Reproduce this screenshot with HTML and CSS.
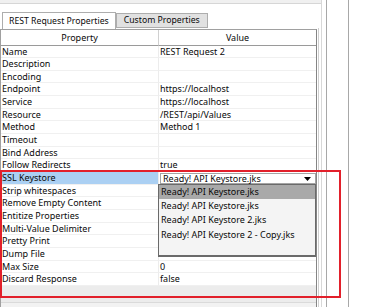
FILE: index.html
```html
<!doctype html>
<html lang=en>
<head>
	<title>REST Request Properties</title>
	<link rel="stylesheet" href="styles.css">
</head>

<body>
	<div class=app>
		<div class=left>
			<div class=topbar></div>
			<div class=body>
				<div class=panel>
					<div class=tabs>
						<div class="tab active">REST Request Properties</div>
						<div class=tab>Custom Properties</div>
					</div>
					<div class=grid>
						<div class=head>Property</div><div class=head>Value</div>
						<div class=prop>Name</div><div class=val>REST Request 2</div>
						<div class=prop>Description</div><div class=val></div>
						<div class=prop>Encoding</div><div class=val></div>
						<div class=prop>Endpoint</div><div class=val>https://localhost</div>
						<div class=prop>Service</div><div class=val>https://localhost</div>
						<div class=prop>Resource</div><div class=val>/REST/api/Values</div>
						<div class=prop>Method</div><div class=val>Method 1</div>
						<div class=prop>Timeout</div><div class=val></div>
						<div class=prop>Bind Address</div><div class=val></div>
						<div class=prop>Follow Redirects</div><div class=val>true</div>
						<div class="prop selected">SSL Keystore</div>
						<div class=val>
							<div class=combo>
								<span>Ready! API Keystore.jks</span>
								<svg width=7 height=4 viewBox="0 0 7 4"><polygon points="0,0 7,0 3.5,4" fill="#000"/></svg>
							</div>
						</div>
						<div class=prop>Strip whitespaces</div><div class=val></div>
						<div class=prop>Remove Empty Content</div><div class=val></div>
						<div class=prop>Entitize Properties</div><div class=val></div>
						<div class=prop>Multi-Value Delimiter</div><div class=val></div>
						<div class=prop>Pretty Print</div><div class=val></div>
						<div class=prop>Dump File</div><div class=val></div>
						<div class=prop>Max Size</div><div class=val>0</div>
						<div class=prop>Discard Response</div><div class=val>false</div>
					</div>
					<div class=filler>
						<div class=status></div>
					</div>
				</div>
				<div class=edge></div>
			</div>
		</div>
		<div class="strip narrow"></div>
		<div class="strip wide"></div>
		<div class="strip rest"></div>

		<ul class=dropdown>
			<li class=current>Ready! API Keystore.jks</li>
			<li>Ready! API Keystore.jks</li>
			<li>Ready! API Keystore 2.jks</li>
			<li>Ready! API Keystore 2 - Copy.jks</li>
		</ul>
		<div class=highlight></div>
	</div>
</body>
</html>
```

FILE: styles.css
```css
html, body {
	margin: 0;
	background: #fff;
}

body {
	font: 9px "Noto Sans", sans-serif;
	color: #0a0a0a;
}

.app {
	position: relative;
	display: flex;
	height: 307px;
	overflow: hidden;
}

.left {
	display: flex;
	flex-direction: column;
	width: 321px;
}

.topbar {
	height: 3px;
	background: #f0f0f0;
	border-bottom: 1px solid #d6d6d6;
}

.body {
	display: flex;
	flex: 1;
}

.panel {
	display: flex;
	flex-direction: column;
	width: 317px;
}

.edge {
	margin: 24px 0 0 1px;
	border-left: 1px solid #cfcfcf;
}

.strip {
	border-left: 1px solid #a8a8a8;
}
.strip.narrow {
	width: 4px;
	border-color: #d8d8d8;
}
.strip.wide {width: 21px}
.strip.rest {flex: 1}

/* tabs */
.tabs {
	display: flex;
	align-items: flex-end;
	height: 25px;
	padding-left: 2px;
}

.tab {
	box-sizing: border-box;
	height: 15px;
	margin-bottom: 1px;
	padding: 0 7px;
	font-size: 8.7px;
	line-height: 13px;
	background: #e1e1e1;
	border: 1px solid #adadad;
	white-space: nowrap;
}

.tab.active {
	height: 17px;
	margin-bottom: 0;
	padding: 0 6px;
	line-height: 16px;
	background: #fff;
	border-bottom: none;
}

/* property grid */
.grid {
	display: grid;
	grid-template-columns: 158px 157px;
	grid-template-rows: 15.5px;
	grid-auto-rows: 12.667px;
	border: 1px solid #a0a0a0;
	border-width: 1px 1px 0 1px;
	border-right-color: #858585;
}

.grid > div {
	box-sizing: border-box;
	white-space: nowrap;
	overflow: hidden;
	line-height: 12px;
	border-bottom: 1px solid #f0f0f0;
}

.head {
	text-align: center;
	line-height: 15px !important;
	border-bottom-color: #9a9a9a !important;
}
.head:first-child {border-right: 1px solid #d0d0d0}

.prop {
	padding-left: 1px;
	border-right: 1px solid #ececec;
}
.prop.selected {background: #abd0f3}

.val {padding-left: 1px}

.combo {
	display: flex;
	align-items: center;
	justify-content: space-between;
	box-sizing: border-box;
	height: 11px;
	margin-top: 1px;
	padding: 0 4px 0 2px;
	line-height: 9px;
	background: #fff;
	border: 1px solid #a4a4a4;

	& svg {flex-shrink: 0}
}

.filler {
	display: flex;
	flex-direction: column;
	justify-content: flex-end;
	flex: 1;
	background: #ececec;
	border-left: 1px solid #a0a0a0;
	border-right: 1px solid #858585;
}

.status {
	height: 4px;
	background: #f2f2f2;
	border-top: 1px solid #dadada;
}

/* overlays */
.dropdown {
	position: absolute;
	left: 158px;
	top: 184px;
	box-sizing: border-box;
	width: 158px;
	height: 73px;
	margin: 0;
	padding: 0;
	list-style: none;
	background: #f4f4f4;
	border: 1px solid #6a6a6a;
	border-bottom-width: 2px;

	& li {
		height: 14.2px;
		padding-left: 2px;
		line-height: 14px;
		white-space: nowrap;
	}

	& .current {background: #a9a9a9}
}

.highlight {
	position: absolute;
	left: 0;
	top: 170px;
	width: 337px;
	height: 124px;
	border: 2px solid #e2202b;
}
```
